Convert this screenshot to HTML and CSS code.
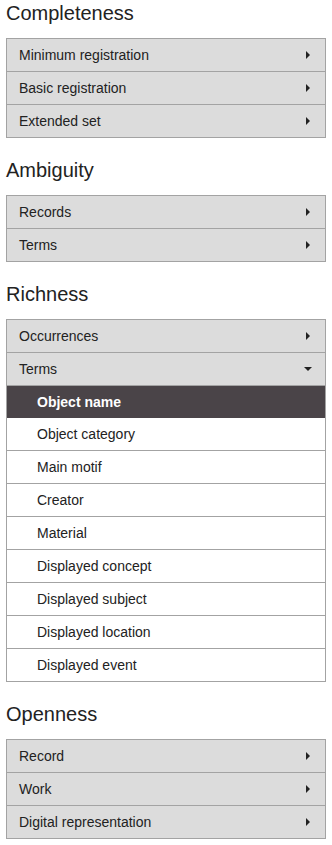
FILE: index.html
```html
<!DOCTYPE html>
<html>
<head>
<meta charset="utf-8">
<link rel="stylesheet" href="styles.css">
</head>
<body>
<section class="group">
  <h2 class="title">Completeness</h2>
  <ul class="menu">
    <li class="item"><span>Minimum registration</span><i class="caret-right"></i></li>
    <li class="item"><span>Basic registration</span><i class="caret-right"></i></li>
    <li class="item"><span>Extended set</span><i class="caret-right"></i></li>
  </ul>
</section>
<section class="group">
  <h2 class="title">Ambiguity</h2>
  <ul class="menu">
    <li class="item"><span>Records</span><i class="caret-right"></i></li>
    <li class="item"><span>Terms</span><i class="caret-right"></i></li>
  </ul>
</section>
<section class="group">
  <h2 class="title">Richness</h2>
  <ul class="menu">
    <li class="item"><span>Occurrences</span><i class="caret-right"></i></li>
    <li class="item"><span>Terms</span><i class="caret-down"></i></li>
    <li class="sub active">Object name</li>
    <li class="sub">Object category</li>
    <li class="sub">Main motif</li>
    <li class="sub">Creator</li>
    <li class="sub">Material</li>
    <li class="sub">Displayed concept</li>
    <li class="sub">Displayed subject</li>
    <li class="sub">Displayed location</li>
    <li class="sub">Displayed event</li>
  </ul>
</section>
<section class="group">
  <h2 class="title">Openness</h2>
  <ul class="menu">
    <li class="item"><span>Record</span><i class="caret-right"></i></li>
    <li class="item"><span>Work</span><i class="caret-right"></i></li>
    <li class="item"><span>Digital representation</span><i class="caret-right"></i></li>
  </ul>
</section>
</body>
</html>
```
FILE: styles.css
```css
html, body {
  margin: 0;
  padding: 0;
  background: #fff;
}
body {
  padding: 2px 6px 0;
  font-family: "Liberation Sans", Arial, sans-serif;
  color: #222;
}
.group {
  margin-bottom: 21px;
}
.title {
  margin: 0 0 13px;
  font-size: 20px;
  line-height: 23px;
  font-weight: normal;
  color: #222;
}
.menu {
  list-style: none;
  margin: 0;
  padding: 0;
  border: 1px solid #a3a3a3;
}
.item, .sub {
  height: 32px;
  line-height: 32px;
  font-size: 14px;
  border-bottom: 1px solid #a3a3a3;
}
.menu li:last-child {
  border-bottom: none;
}
.item {
  display: flex;
  align-items: center;
  justify-content: space-between;
  padding: 0 15px 0 12px;
  background: #dcdcdc;
}
.sub {
  padding-left: 30px;
  background: #fff;
}
.sub.active {
  background: #4a4448;
  color: #fff;
  font-weight: bold;
  border-bottom: none;
}
.caret-right {
  width: 0;
  height: 0;
  border-top: 4px solid transparent;
  border-bottom: 4px solid transparent;
  border-left: 4px solid #222;
}
.caret-down {
  width: 0;
  height: 0;
  border-left: 4px solid transparent;
  border-right: 4px solid transparent;
  border-top: 4px solid #222;
  margin-right: -2px;
}
```
